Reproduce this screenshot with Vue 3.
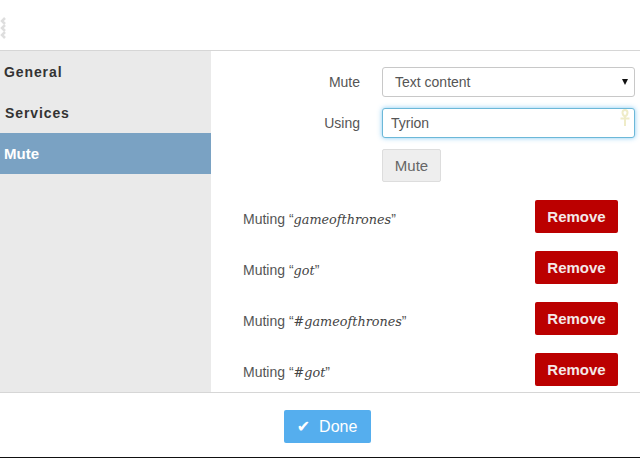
<script setup>
import { ref } from 'vue'

const tabs = ['General', 'Services', 'Mute']
const activeTab = ref('Mute')
const muteType = ref('Text content')
const term = ref('Tyrion')
const muted = ref(['gameofthrones', 'got', '#gameofthrones', '#got'])

function remove(word) {
    muted.value = muted.value.filter(w => w !== word)
}
</script>

<template>
<div class="Dialog">
    <header class="Header">
        <svg class="Grip" width="6" height="22" viewBox="0 0 6 22">
            <path d="M5 1 2 4l3 3M5 8l-3 3 3 3M5 15l-3 3 3 3" fill="none" stroke="#dedede" stroke-width="2.500" />
        </svg>
    </header>
    <div class="Body">
        <nav class="Sidebar">
            <div
                v-for="tab in tabs"
                :key="tab"
                class="Tab"
                :class="{ Active: tab === activeTab, Services: tab === 'Services' }"
                @click="activeTab = tab"
            >{{ tab }}</div>
        </nav>
        <main class="Content">
            <div class="Field">
                <label class="Label">Mute</label>
                <div class="Select">
                    <span>{{ muteType }}</span>
                    <span class="Arrow"></span>
                </div>
            </div>
            <div class="Field">
                <label class="Label">Using</label>
                <div class="InputWrap">
                    <input v-model="term" class="Input" />
                    <svg class="Ankh" width="12" height="18" viewBox="0 0 12 18">
                        <path d="M6 7.500C4 6.500 3.500 5 3.500 3.500a2.500 2.500 0 0 1 5 0C8.500 5 8 6.500 6 7.500ZM6 7.500V17M1.500 9.500h9" fill="none" stroke="#efecc8" stroke-width="2" />
                    </svg>
                </div>
            </div>
            <button class="MuteButton">Mute</button>
            <div class="Rows">
                <div v-for="word in muted" :key="word" class="Row">
                    <span class="RowText">Muting “<em>{{ word }}</em>”</span>
                    <button class="Remove" @click="remove(word)">Remove</button>
                </div>
            </div>
        </main>
    </div>
    <footer class="Footer">
        <button class="Done"><span class="Check">✔</span>Done</button>
    </footer>
</div>
</template>

<style>
html, body {
    margin: 0;
    background: white;
}
</style>

<style scoped>
.Dialog {
    display: flex;
    flex-direction: column;
    height: 458px;
    width: 640px;
    overflow: hidden;
    box-sizing: border-box;
    font-family: 'Liberation Sans', Arial, sans-serif;
    font-size: 14px;
    color: #555555;
    background-color: white;
    border-bottom: 1px solid #111111;
}

.Header {
    flex: none;
    height: 50px;
    border-bottom: 1px solid #d6d6d6;
    display: flex;
    align-items: center;
}

.Grip {
    display: block;
    margin-top: 5px;
}

.Body {
    flex: none;
    height: 341px;
    display: flex;
    overflow: hidden;
}

.Sidebar {
    flex: none;
    width: 211px;
    background-color: #eaeaea;
}

.Tab {
    height: 41px;
    line-height: 43px;
    padding-left: 4px;
    font-weight: bold;
    letter-spacing: .9px;
    color: #333333;
    cursor: pointer;
}

.Tab.Services {
    padding-left: 5px;
}

.Tab.Active {
    line-height: 41px;
    background-color: #7aa2c3;
    color: white;
    font-size: 15px;
    letter-spacing: 0;
}

.Content {
    flex: 1;
    box-sizing: border-box;
    padding: 16px 5px 0 0;
    min-width: 0;
}

.Field {
    display: flex;
    align-items: center;
    margin-bottom: 11px;
}

.Label {
    width: 149px;
    margin-right: 22px;
    text-align: right;
}

.Select {
    flex: 1;
    height: 30px;
    box-sizing: border-box;
    display: flex;
    align-items: center;
    justify-content: space-between;
    padding: 0 6px 0 12px;
    background-color: white;
    border: 1px solid #c8c8c8;
    border-radius: 3px;
}

.Arrow {
    width: 0;
    height: 0;
    border-left: 3px solid transparent;
    border-right: 3px solid transparent;
    border-top: 6px solid #111111;
}

.InputWrap {
    flex: 1;
    position: relative;
    display: flex;
}

.Input {
    width: 100%;
    height: 30px;
    box-sizing: border-box;
    padding: 0 8px;
    font: inherit;
    color: #555555;
    outline: none;
    border: 1px solid #6cb8d8;
    border-radius: 3px;
    box-shadow: 0 0 5px rgba(102, 190, 240, .8);
}

.Ankh {
    position: absolute;
    top: 1px;
    right: 4px;
}

.MuteButton {
    display: block;
    margin-left: 171px;
    width: 59px;
    height: 33px;
    padding: 0;
    font: inherit;
    font-size: 15px;
    color: #666666;
    background-color: #eeeeee;
    border: 1px solid #dddddd;
    border-radius: 2px;
}

.Rows {
    margin-top: 18px;
    padding: 0 17px 0 32px;
}

.Row {
    display: flex;
    align-items: center;
    justify-content: space-between;
    height: 33px;
    margin-bottom: 18px;
}

.RowText {
    padding-top: 4px;
}

.RowText em {
    font-family: 'DejaVu Serif', serif;
    font-size: 12.800px;
    font-style: italic;
    color: #444444;
}

.Remove {
    width: 83px;
    height: 33px;
    padding: 0;
    font: inherit;
    font-size: 15px;
    font-weight: bold;
    color: #f4e8e8;
    background-color: #bb0000;
    border: none;
    border-radius: 2px;
}

.Footer {
    flex: 1;
    box-sizing: border-box;
    display: flex;
    justify-content: center;
    padding: 17px 0 0 14px;
    border-top: 1px solid #d6d6d6;
}

.Done {
    width: 87px;
    height: 33px;
    padding: 0;
    font: inherit;
    font-size: 16px;
    color: white;
    background-color: #55aeee;
    border: none;
    border-radius: 2px;
}

.Check {
    margin-right: 9px;
    font-family: 'DejaVu Sans', sans-serif;
}
</style>
